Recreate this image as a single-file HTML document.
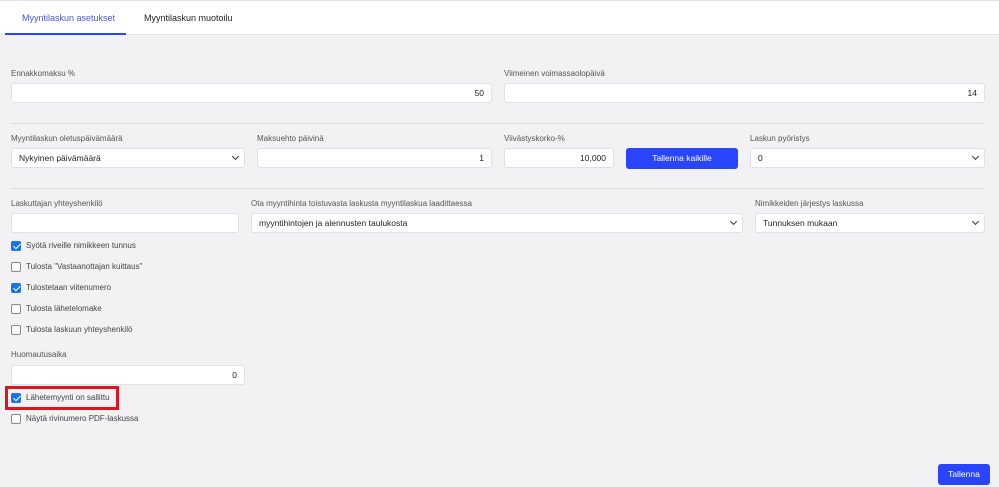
<!DOCTYPE html>
<html><head><meta charset="utf-8"><style>
*{box-sizing:border-box;margin:0;padding:0}
body{width:999px;height:487px;background:#f2f2f4;font-family:"Liberation Sans",sans-serif;position:relative;overflow:hidden;color:#333}
.a{position:absolute}
.hdr{left:0;top:0;width:999px;height:35px;background:#fff;border-bottom:1px solid #e2e2e6;border-top:1px solid #e6e6e6}
.tab{font-size:9px;top:13px}
.lbl{font-size:8px;color:#555}
.in{background:#fff;border:1px solid #e1e1e4;border-radius:3px;height:20px;font-size:8.5px;line-height:18px;padding:0 7px;color:#222}
.r{text-align:right}
.sel:after{content:"";position:absolute;right:6px;top:5px;width:4px;height:4px;border-right:1.6px solid #333;border-bottom:1.6px solid #333;transform:rotate(45deg)}
.hr{height:1px;background:#dcdcdf;left:10px;width:975px}
.cb{width:10px;height:10px;border:1px solid #888;border-radius:2px;background:#fff}
.cb.on{background:#1a73e8;border-color:#1a73e8}
.cb.on:after{content:"";position:absolute;left:2.5px;top:0px;width:3px;height:6px;border-right:1.6px solid #fff;border-bottom:1.6px solid #fff;transform:rotate(45deg)}
.ct{font-size:8px;color:#444}
.btn{background:#2a45ff;color:#fff;border-radius:3px;font-size:8.5px;text-align:center;line-height:21px}
</style></head><body>
<div class="a hdr"></div>
<div class="a" style="left:5px;top:1px;width:121px;height:34px;background:#fff"></div>
<div class="a tab" style="left:22px;color:#4a55e0">Myyntilaskun asetukset</div>
<div class="a" style="left:5px;top:33px;width:121px;height:2px;background:#2a45ff"></div>
<div class="a tab" style="left:144px;color:#222">Myyntilaskun muotoilu</div>

<div class="a lbl" style="left:11px;top:69px">Ennakkomaksu %</div>
<div class="a in r" style="left:11px;top:83px;width:481px">50</div>
<div class="a lbl" style="left:504px;top:69px">Viimeinen voimassaolopäivä</div>
<div class="a in r" style="left:504px;top:83px;width:481px">14</div>
<div class="a hr" style="top:123px"></div>

<div class="a lbl" style="left:11px;top:134px">Myyntilaskun oletuspäivämäärä</div>
<div class="a in sel" style="left:11px;top:148px;width:234px">Nykyinen päivämäärä</div>
<div class="a lbl" style="left:257px;top:134px">Maksuehto päivinä</div>
<div class="a in r" style="left:257px;top:148px;width:235px">1</div>
<div class="a lbl" style="left:504px;top:134px">Viivästyskorko-%</div>
<div class="a in r" style="left:504px;top:148px;width:110px">10,000</div>
<div class="a btn" style="left:626px;top:148px;width:112px">Tallenna kaikille</div>
<div class="a lbl" style="left:750px;top:134px">Laskun pyöristys</div>
<div class="a in sel" style="left:750px;top:148px;width:235px">0</div>
<div class="a hr" style="top:188px"></div>

<div class="a lbl" style="left:11px;top:199px">Laskuttajan yhteyshenkilö</div>
<div class="a in" style="left:11px;top:213px;width:228px"></div>
<div class="a lbl" style="left:251px;top:199px">Ota myyntihinta toistuvasta laskusta myyntilaskua laadittaessa</div>
<div class="a in sel" style="left:251px;top:213px;width:492px">myyntihintojen ja alennusten taulukosta</div>
<div class="a lbl" style="left:755px;top:199px">Nimikkeiden järjestys laskussa</div>
<div class="a in sel" style="left:755px;top:213px;width:230px">Tunnuksen mukaan</div>

<div class="a cb on" style="left:11px;top:241px"></div><div class="a ct" style="left:26px;top:241px">Syötä riveille nimikkeen tunnus</div>
<div class="a cb" style="left:11px;top:262px"></div><div class="a ct" style="left:26px;top:262px">Tulosta "Vastaanottajan kuittaus"</div>
<div class="a cb on" style="left:11px;top:283px"></div><div class="a ct" style="left:26px;top:283px">Tulostetaan viitenumero</div>
<div class="a cb" style="left:11px;top:304px"></div><div class="a ct" style="left:26px;top:304px">Tulosta lähetelomake</div>
<div class="a cb" style="left:11px;top:325px"></div><div class="a ct" style="left:26px;top:325px">Tulosta laskuun yhteyshenkilö</div>

<div class="a lbl" style="left:11px;top:350px">Huomautusaika</div>
<div class="a in r" style="left:11px;top:365px;width:234px">0</div>
<div class="a" style="left:5px;top:386px;width:114px;height:24px;border:3px solid #e0141e"></div>
<div class="a cb on" style="left:11px;top:393px"></div><div class="a ct" style="left:26px;top:393px">Lähetemyynti on sallittu</div>
<div class="a cb" style="left:11px;top:414px"></div><div class="a ct" style="left:26px;top:414px">Näytä rivinumero PDF-laskussa</div>

<div class="a btn" style="left:938px;top:464px;width:52px">Tallenna</div>
</body></html>
